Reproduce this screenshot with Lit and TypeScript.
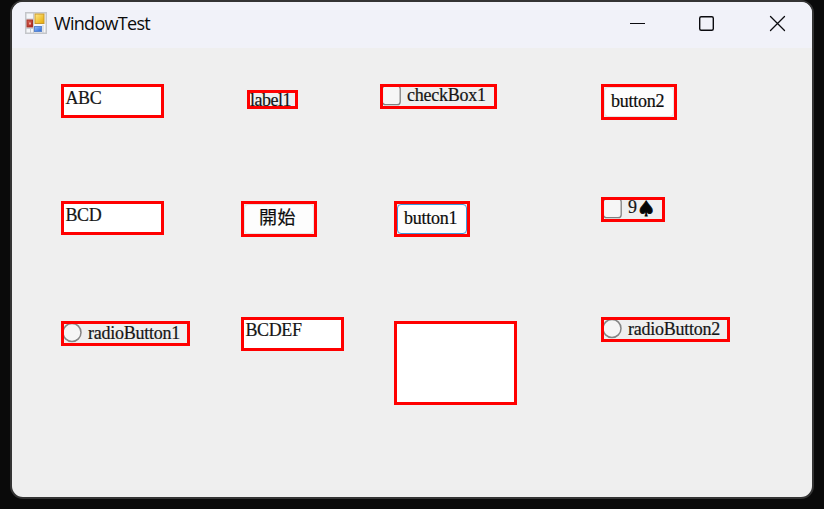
import { LitElement, html, css, svg } from "lit";
import { customElement, property } from "lit/decorators.js";

@customElement("form-control")
class FormControl extends LitElement {
  @property() kind = "text";
  @property() label = "";
  @property() suit = "";

  static styles = css`
    :host {
      display: block;
      box-sizing: border-box;
      border: 3px solid #ff0000;
      overflow: hidden;
      font: 18px/20px "Liberation Serif", "Noto Sans CJK TC", serif;
      color: #161616;
      white-space: pre;
      -webkit-text-stroke: 0.2px currentColor;
    }
    .row {
      display: flex;
      align-items: flex-start;
      height: 100%;
    }
    .text {
      background: #fff;
      padding-left: 1.5px;
    }
    .text span {
      margin-top: var(--drop, 1px);
      letter-spacing: -0.4px;
    }
    .caption {
      letter-spacing: var(--tracking, -0.25px);
      margin-top: var(--drop, 0);
    }
    .button {
      box-sizing: border-box;
      background: #fdfdfd;
      border: 1px solid #e4e4e4;
      border-radius: 4px;
      padding-left: var(--inset, 6px);
    }
    .focus {
      border-color: #3c97dc;
    }
    .button .caption {
      margin-top: var(--drop, 3px);
      color: #0c0c0c;
    }
    svg {
      flex: none;
      width: 24px;
      height: 21px;
    }
    .suit {
      font: 21px/20px "DejaVu Sans", sans-serif;
      color: #050505;
      margin: -1px 0 0 0;
      -webkit-text-stroke: 0.8px currentColor;
    }
  `;

  render() {
    switch (this.kind) {
      case "text":
        return html`<div class="row text"><span>${this.label}</span></div>`;
      case "label":
        return html`<div class="row"><span class="caption">${this.label}</span></div>`;
      case "button":
      case "focus":
        return html`<div class="row button ${this.kind}"><span class="caption">${this.label}</span></div>`;
      default: {
        const mark =
          this.kind === "radio"
            ? svg`<circle cx="8" cy="8.500" r="9" fill="#f5f5f5" stroke="#858585" stroke-width="1.500"/>`
            : svg`<rect x="-0.600" y="-1" width="17.800" height="18.700" rx="3" fill="#f6f6f6" stroke="#808080" stroke-width="1.300"/>`;
        return html`<div class="row">
          <svg viewBox="0 0 24 21">${mark}</svg><span class="caption">${this.label}</span>${this.suit
            ? html`<span class="suit">${this.suit}</span>`
            : ""}
        </div>`;
      }
    }
  }
}

@customElement("app-root")
class AppRoot extends LitElement {
  static styles = css`
    :host {
      display: block;
      box-sizing: border-box;
      width: 824px;
      height: 509px;
      padding: 0 10px 10px;
      background: #0a0a0a;
      overflow: hidden;
    }
    .window {
      box-sizing: border-box;
      height: 499px;
      border: 2px solid #343434;
      border-radius: 13px;
      background: #efefef;
      overflow: hidden;
    }
    header {
      display: flex;
      align-items: center;
      height: 46px;
      background: #f1f2f9;
    }
    .logo {
      width: 22px;
      height: 22px;
      margin: -4px 7px 0 13px;
    }
    .title {
      flex: 1;
      font: 18px/24px "Open Sans", "Noto Sans", sans-serif;
      letter-spacing: -0.7px;
      color: #0b0b0b;
      margin-top: -4px;
    }
    .buttons {
      width: 200px;
      height: 46px;
    }
    main {
      display: grid;
      grid-template-columns: 180px 153px 207px 1fr;
      grid-template-rows: 117px 116px 1fr;
      align-items: start;
      justify-items: start;
      padding: 36px 0 0 49px;
      height: 413px;
    }
    .field {
      width: 103px;
      height: 34px;
    }
    .push {
      width: 76px;
      height: 36px;
    }
    .start {
      --inset: 14px;
      --tracking: 0.4px;
    }
    .label {
      width: 51px;
      height: 19px;
      margin: 6px 0 0 6px;
      --drop: -3.5px;
      --tracking: -0.5px;
    }
    .check {
      width: 117px;
      height: 25px;
      margin-left: -14px;
      --drop: -2px;
    }
    .card {
      width: 64px;
      height: 25px;
      margin-top: -4px;
      --drop: -3px;
    }
    .radio {
      width: 129px;
      height: 25px;
      --drop: -1px;
    }
    .lower {
      margin-top: 4px;
    }
    .flush {
      --drop: 0px;
    }
    .area {
      width: 123px;
      height: 84px;
      margin-top: 4px;
    }
  `;

  render() {
    return html`
      <div class="window">
        <header>
          <svg class="logo" viewBox="0 0 22 22">
            <defs>
              <linearGradient id="gold" x2="1" y2="1"><stop stop-color="#ffe98a"/><stop offset="1" stop-color="#e6a800"/></linearGradient>
              <linearGradient id="red" x2="1" y2="1"><stop stop-color="#dc6b5c"/><stop offset="1" stop-color="#a81a12"/></linearGradient>
              <linearGradient id="blue" x2="1" y2="1"><stop stop-color="#91bcff"/><stop offset="1" stop-color="#2b68d4"/></linearGradient>
            </defs>
            <rect x=".75" y=".75" width="20.500" height="20.500" fill="#f5f6f9" stroke="#c4c6ca" stroke-width="1.500"/>
            <path d="M1 7H9M8.500 1V21M1 16.500H9M5.500 16V21M18 13V21" stroke="#c9cbd0" fill="none"/>
            <rect x="10" y="2" width="9" height="9.500" fill="url(#gold)" stroke="#c9982a"/>
            <rect x="2" y="8" width="5.500" height="7" fill="url(#red)" stroke="#a33228"/>
            <rect x="4" y="10.500" width="2" height="2" fill="#efaaa0"/>
            <rect x="9.500" y="14.500" width="7" height="5" fill="url(#blue)" stroke="#5b86cf"/>
          </svg>
          <span class="title">WindowTest</span>
          <svg class="buttons" viewBox="0 0 200 46" fill="none" stroke="#0b0b0f">
            <path d="M18 21.500H33" stroke-width="1"/>
            <rect x="87.700" y="14.700" width="13.600" height="13.600" rx="1.500" stroke-width="1.400"/>
            <path d="M158.500 14.500L172.500 28.500M172.500 14.500L158.500 28.500" stroke-width="1.300" stroke-linecap="round"/>
          </svg>
        </header>
        <main>
          <form-control class="field" label="ABC"></form-control>
          <form-control class="label" kind="label" label="label1"></form-control>
          <form-control class="check" kind="check" label="checkBox1"></form-control>
          <form-control class="push" kind="button" label="button2"></form-control>

          <form-control class="field" label="BCD"></form-control>
          <form-control class="push start" kind="button" label="開始"></form-control>
          <form-control class="push" kind="focus" label="button1"></form-control>
          <form-control class="card" kind="check" label="9" suit="♠"></form-control>

          <form-control class="radio lower" kind="radio" label="radioButton1"></form-control>
          <form-control class="field flush" label="BCDEF"></form-control>
          <form-control class="area"></form-control>
          <form-control class="radio" kind="radio" label="radioButton2"></form-control>
        </main>
      </div>
    `;
  }
}
